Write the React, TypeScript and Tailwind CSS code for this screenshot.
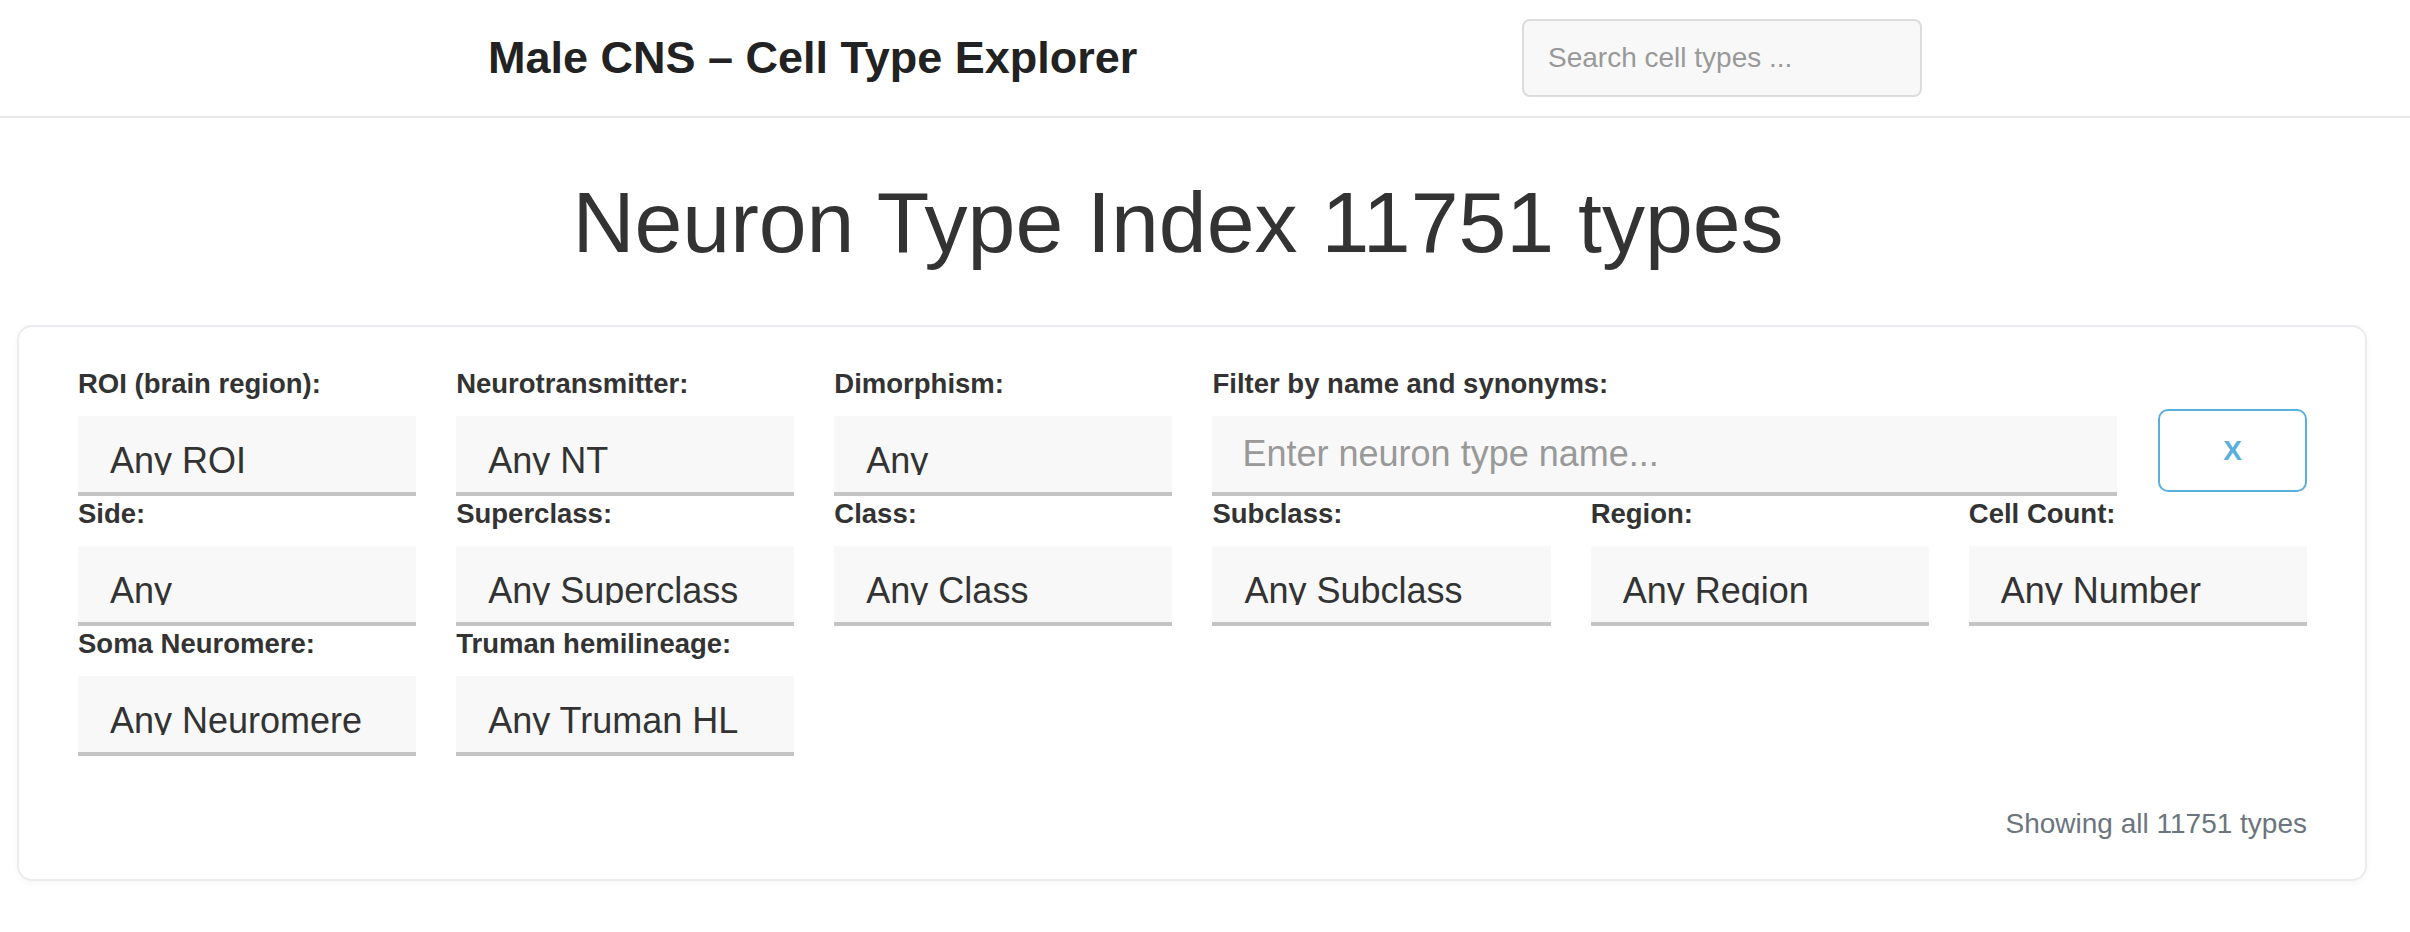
const fields: { label: string; value: string }[][] = [
  [
    { label: "ROI (brain region):", value: "Any ROI" },
    { label: "Neurotransmitter:", value: "Any NT" },
    { label: "Dimorphism:", value: "Any" },
  ],
  [
    { label: "Side:", value: "Any" },
    { label: "Superclass:", value: "Any Superclass" },
    { label: "Class:", value: "Any Class" },
    { label: "Subclass:", value: "Any Subclass" },
    { label: "Region:", value: "Any Region" },
    { label: "Cell Count:", value: "Any Number" },
  ],
  [
    { label: "Soma Neuromere:", value: "Any Neuromere" },
    { label: "Truman hemilineage:", value: "Any Truman HL" },
  ],
];

const Label = ({ children }: { children: string }) => (
  <div className="h-[35px] leading-[35px] mb-[15px] text-[27.5px] font-bold text-[#333] whitespace-nowrap">
    {children}
  </div>
);

const Select = ({ label, value }: { label: string; value: string }) => (
  <div>
    <Label>{label}</Label>
    <div className="h-[80px] bg-[#f8f8f8] border-b-4 border-[#c4c4c4] pl-[32px] pt-[24px]">
      <div className="h-[35px] overflow-hidden leading-[41px] text-[36px] text-[#333] whitespace-nowrap">
        {value}
      </div>
    </div>
  </div>
);

const App = () => {
  return (
    <div className="min-h-screen bg-white font-['Liberation_Sans',Arial,sans-serif] text-[#333]">
      <header className="h-[118px] border-b-2 border-[#e7e7e7]">
        <div className="w-[1434px] mx-auto h-full flex items-center justify-between">
          <div className="text-[45px] font-bold text-[#222]">
            Male CNS – Cell Type Explorer
          </div>
          <input
            type="text"
            placeholder="Search cell types ..."
            className="w-[400px] h-[78px] border-2 border-[#dcdcdc] rounded-[8px] bg-[#f8f8f8] px-[24px] text-[28px] text-[#333] placeholder:text-[#999] outline-none"
          />
        </div>
      </header>

      <h1 className="mt-[57px] mb-[55px] pr-[54px] text-center text-[86px] leading-[95px] font-normal text-[#333]">
        Neuron Type Index 11751 types
      </h1>

      <div className="ml-[17px] mr-[43px] border-2 border-[#ebebf0] rounded-[15px] shadow-[0_2px_6px_rgba(0,0,0,0.04)] pt-[39px] pb-[35px] pl-[59px] pr-[58px]">
        <div className="grid grid-cols-6 gap-x-[40px]">
          {fields[0].map((f) => (
            <Select key={f.label} label={f.label} value={f.value} />
          ))}
          <div className="col-span-3">
            <Label>Filter by name and synonyms:</Label>
            <div className="flex items-start gap-[41px]">
              <input
                type="text"
                placeholder="Enter neuron type name..."
                className="flex-1 min-w-0 h-[80px] bg-[#f8f8f8] border-b-4 border-[#c4c4c4] px-[30px] text-[36px] text-[#333] placeholder:text-[#999] outline-none"
              />
              <button className="w-[149px] h-[83px] mt-[-7px] border-2 border-[#5ab0dc] rounded-[10px] bg-white text-[28px] font-bold text-[#5ab0dc]">
                X
              </button>
            </div>
          </div>
          {fields[1].map((f) => (
            <Select key={f.label} label={f.label} value={f.value} />
          ))}
          {fields[2].map((f) => (
            <Select key={f.label} label={f.label} value={f.value} />
          ))}
        </div>
        <div className="mt-[48px] text-right text-[28px] leading-[40px] text-[#6c757d]">
          Showing all 11751 types
        </div>
      </div>
    </div>
  );
};

export default App;
